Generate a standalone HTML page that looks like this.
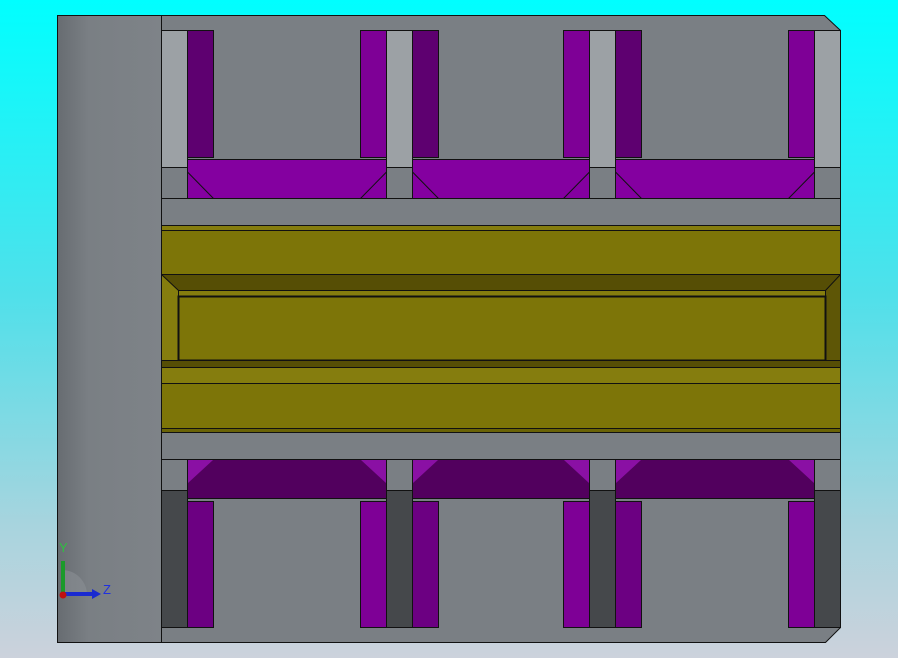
<!DOCTYPE html>
<html><head><style>html,body{margin:0;padding:0}body{width:898px;height:658px;overflow:hidden;background:linear-gradient(#00ffff 0%,#50e0ea 45%,#a8d4de 80%,#ccd2dc 100%)}</style></head><body>
<svg width="898" height="658" viewBox="0 0 898 658" xmlns="http://www.w3.org/2000/svg" style="position:absolute;left:0;top:0">
<defs>
<linearGradient id="lp" x1="0" x2="1"><stop offset="0" stop-color="#676c71"/><stop offset="0.3" stop-color="#7a7f84"/><stop offset="1" stop-color="#7e8388"/></linearGradient>
</defs>
<g stroke="#111" stroke-width="1">
<polygon points="57.5,15.5 824.5,15.5 840.5,30.5 840.5,627.5 825.5,642.5 57.5,642.5" fill="#7a7f84"/>
<rect x="57.5" y="15.5" width="104" height="627" fill="url(#lp)"/>
</g>
<g stroke="#111" stroke-width="1">
<!-- top columns -->
<rect x="161.5" y="30.5" width="26" height="137" fill="#9ca1a5"/>
<rect x="386.5" y="30.5" width="26" height="137" fill="#9ca1a5"/>
<rect x="589.5" y="30.5" width="26" height="137" fill="#9ca1a5"/>
<rect x="814.5" y="30.5" width="26" height="137" fill="#9ca1a5"/>
<rect x="161.5" y="167.5" width="26" height="31" fill="#7a7f84"/>
<rect x="386.5" y="167.5" width="26" height="31" fill="#7a7f84"/>
<rect x="589.5" y="167.5" width="26" height="31" fill="#7a7f84"/>
<rect x="814.5" y="167.5" width="26" height="31" fill="#7a7f84"/>
<!-- top verticals -->
<rect x="187.5" y="30.5" width="26" height="127" fill="#5e0070"/>
<rect x="360.5" y="30.5" width="26" height="127" fill="#7e0096"/>
<rect x="412.5" y="30.5" width="26" height="127" fill="#5e0070"/>
<rect x="563.5" y="30.5" width="26" height="127" fill="#7e0096"/>
<rect x="615.5" y="30.5" width="26" height="127" fill="#5e0070"/>
<rect x="788.5" y="30.5" width="26" height="127" fill="#7e0096"/>
<!-- top bars -->
<rect x="187.5" y="159.5" width="199" height="39" fill="#8400a0"/>
<rect x="412.5" y="159.5" width="177" height="39" fill="#8400a0"/>
<rect x="615.5" y="159.5" width="199" height="39" fill="#8400a0"/>
<path d="M187.5 172L213.5 198.5M386.5 172L360.5 198.5M412.5 172L438.5 198.5M589.5 172L563.5 198.5M615.5 172L641.5 198.5M814.5 172L788.5 198.5" fill="none"/>
<!-- gray bands -->
<rect x="161.5" y="198.5" width="679" height="27" fill="#7a7f84"/>
<rect x="161.5" y="432.5" width="679" height="27" fill="#7a7f84"/>
<!-- yellow -->
<rect x="161.5" y="225.5" width="679" height="207" fill="#7d7508"/>
<rect x="161.5" y="225.5" width="679" height="5" fill="#857d0e"/>
<rect x="161.5" y="274.5" width="679" height="16" fill="#564e05"/>
<rect x="161.5" y="290.5" width="679" height="6" fill="#857d0e"/>
<polygon points="161.5,274.5 178.5,290.5 178.5,360.5 161.5,380.5" fill="#857d0e"/>
<polygon points="840.5,274.5 825.5,290.5 825.5,360.5 840.5,380.5" fill="#5e5606"/>
<rect x="178.5" y="296.5" width="647" height="64" fill="#7d7508" stroke-width="2"/>
<rect x="161.5" y="360.5" width="679" height="7" fill="#564e05"/>
<rect x="161.5" y="367.5" width="679" height="16" fill="#857d0e"/>
<line x1="161.5" y1="428.5" x2="840.5" y2="428.5"/>
<rect x="161.5" y="428.5" width="679" height="4" fill="#6a6306"/>
<!-- bottom columns -->
<rect x="161.5" y="459.5" width="26" height="31" fill="#7a7f84"/>
<rect x="386.5" y="459.5" width="26" height="31" fill="#7a7f84"/>
<rect x="589.5" y="459.5" width="26" height="31" fill="#7a7f84"/>
<rect x="814.5" y="459.5" width="26" height="31" fill="#7a7f84"/>
<rect x="161.5" y="490.5" width="26" height="137" fill="#45484b"/>
<rect x="386.5" y="490.5" width="26" height="137" fill="#45484b"/>
<rect x="589.5" y="490.5" width="26" height="137" fill="#45484b"/>
<rect x="814.5" y="490.5" width="26" height="137" fill="#45484b"/>
<!-- bottom bars -->
<rect x="187.5" y="459.5" width="199" height="39" fill="#52005e"/>
<rect x="412.5" y="459.5" width="177" height="39" fill="#52005e"/>
<rect x="615.5" y="459.5" width="199" height="39" fill="#52005e"/>
<g stroke="none" fill="#8a10a4">
<polygon points="188,460 213,460 188,483"/><polygon points="386,460 361,460 386,483"/>
<polygon points="413,460 438,460 413,483"/><polygon points="589,460 564,460 589,483"/>
<polygon points="616,460 641,460 616,483"/><polygon points="814,460 789,460 814,483"/>
</g>
<!-- bottom verticals -->
<rect x="187.5" y="501.5" width="26" height="126" fill="#6c0082"/>
<rect x="360.5" y="501.5" width="26" height="126" fill="#7e0096"/>
<rect x="412.5" y="501.5" width="26" height="126" fill="#6c0082"/>
<rect x="563.5" y="501.5" width="26" height="126" fill="#7e0096"/>
<rect x="615.5" y="501.5" width="26" height="126" fill="#6c0082"/>
<rect x="788.5" y="501.5" width="26" height="126" fill="#7e0096"/>
</g>
<!-- triad -->
<path d="M62 595 L62 570 A25 25 0 0 1 87 595 Z" fill="#8a8f94" opacity="0.6"/>
<rect x="61" y="561" width="4" height="33" fill="#1a9a2a"/>
<rect x="63" y="592" width="30" height="4" fill="#1a2ad0"/>
<polygon points="92,589 101,594 92,599" fill="#1a2ad0"/>
<circle cx="63" cy="595" r="3.5" fill="#c01010"/>
<text x="59" y="552" font-family="Liberation Sans,sans-serif" font-size="13" fill="#2ec040">Y</text>
<text x="103" y="594" font-family="Liberation Sans,sans-serif" font-size="13" fill="#2030e0">Z</text>
</svg>
</body></html>
